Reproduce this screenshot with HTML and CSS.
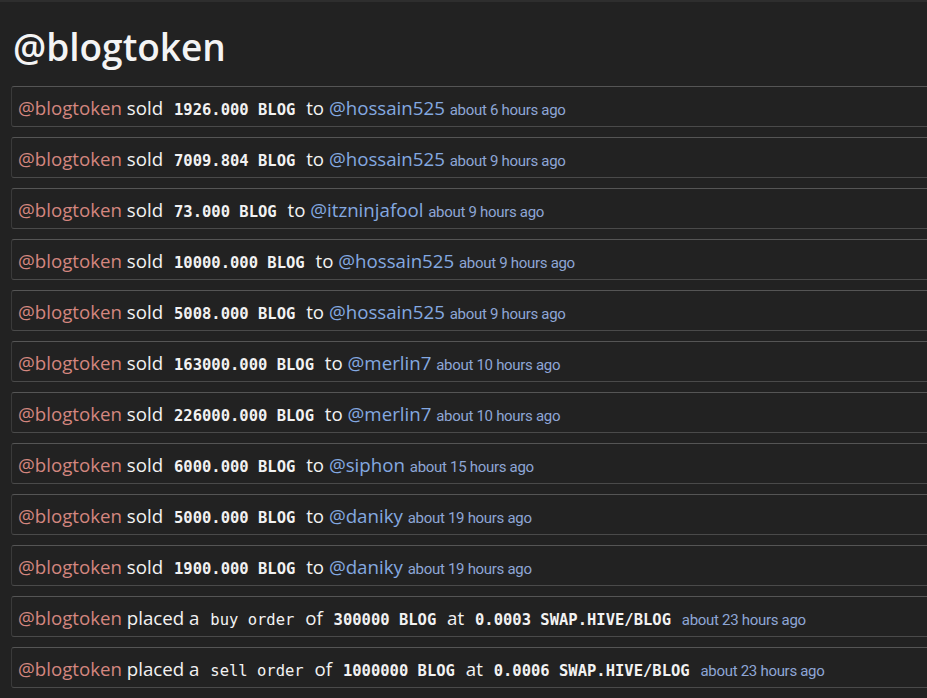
FILE: index.html
```html
<!DOCTYPE html>
<html lang="en">
<head>
  <meta charset="UTF-8" />
  <title>@blogtoken</title>
  <link rel="stylesheet" href="styles.css">
</head>
<body>
  <h1 class="title">@blogtoken</h1>

  <ul class="feed">
    <li class="entry">
      <span class="actor">@blogtoken</span> sold <code class="qty">1926.000 BLOG</code> to <span class="user">@hossain525</span> <span class="when">about 6 hours ago</span>
    </li>
    <li class="entry">
      <span class="actor">@blogtoken</span> sold <code class="qty">7009.804 BLOG</code> to <span class="user">@hossain525</span> <span class="when">about 9 hours ago</span>
    </li>
    <li class="entry">
      <span class="actor">@blogtoken</span> sold <code class="qty">73.000 BLOG</code> to <span class="user">@itzninjafool</span> <span class="when">about 9 hours ago</span>
    </li>
    <li class="entry">
      <span class="actor">@blogtoken</span> sold <code class="qty">10000.000 BLOG</code> to <span class="user">@hossain525</span> <span class="when">about 9 hours ago</span>
    </li>
    <li class="entry">
      <span class="actor">@blogtoken</span> sold <code class="qty">5008.000 BLOG</code> to <span class="user">@hossain525</span> <span class="when">about 9 hours ago</span>
    </li>
    <li class="entry">
      <span class="actor">@blogtoken</span> sold <code class="qty">163000.000 BLOG</code> to <span class="user">@merlin7</span> <span class="when">about 10 hours ago</span>
    </li>
    <li class="entry">
      <span class="actor">@blogtoken</span> sold <code class="qty">226000.000 BLOG</code> to <span class="user">@merlin7</span> <span class="when">about 10 hours ago</span>
    </li>
    <li class="entry">
      <span class="actor">@blogtoken</span> sold <code class="qty">6000.000 BLOG</code> to <span class="user">@siphon</span> <span class="when">about 15 hours ago</span>
    </li>
    <li class="entry">
      <span class="actor">@blogtoken</span> sold <code class="qty">5000.000 BLOG</code> to <span class="user">@daniky</span> <span class="when">about 19 hours ago</span>
    </li>
    <li class="entry">
      <span class="actor">@blogtoken</span> sold <code class="qty">1900.000 BLOG</code> to <span class="user">@daniky</span> <span class="when">about 19 hours ago</span>
    </li>
    <li class="entry">
      <span class="actor">@blogtoken</span> placed a <code class="kind">buy order</code> of <code class="qty">300000 BLOG</code> at <code class="qty">0.0003 SWAP.HIVE/BLOG</code> <span class="when">about 23 hours ago</span>
    </li>
    <li class="entry">
      <span class="actor">@blogtoken</span> placed a <code class="kind">sell order</code> of <code class="qty">1000000 BLOG</code> at <code class="qty">0.0006 SWAP.HIVE/BLOG</code> <span class="when">about 23 hours ago</span>
    </li>
  </ul>
</body>
</html>
```

FILE: styles.css
```css
body, html {
  margin: 0;
  padding: 0;
  background: #222222;
  color: #f2f2f2;
  font-family: 'Open Sans', 'Noto Sans', sans-serif;
  overflow: hidden;
}

body {
  border-top: 2px solid #2e2e2e;
  padding: 0 0 0 11px;
}

.title {
  margin: 0;
  padding: 23px 0 0 2px;
  height: 61px;
  font-size: 37px;
  font-weight: 600;
  line-height: 44px;
  color: #f4f4f4;
}

.feed {
  list-style: none;
  margin: 0;
  padding: 0;
}

.entry {
  white-space: nowrap;
  height: 39px;
  line-height: 42px;
  margin-bottom: 10px;
  padding-left: 6px;
  border-top: 1px solid #555555;
  border-bottom: 1px solid #4a4a4a;
  border-left: 1px solid #3a3a3a;
  border-top-left-radius: 3px;
  border-bottom-left-radius: 3px;
  font-size: 18.7px;
}

.actor {
  color: #d4867f;
}

.user {
  color: #84a9e0;
}

.when {
  color: #8ea6d6;
  font-family: 'Roboto', sans-serif;
  font-size: 15px;
  letter-spacing: -0.3px;
}

.qty, .kind {
  font-family: 'DejaVu Sans Mono', monospace;
  font-size: 15.5px;
  padding: 0 6px;
}

.qty {
  font-weight: bold;
}
```
